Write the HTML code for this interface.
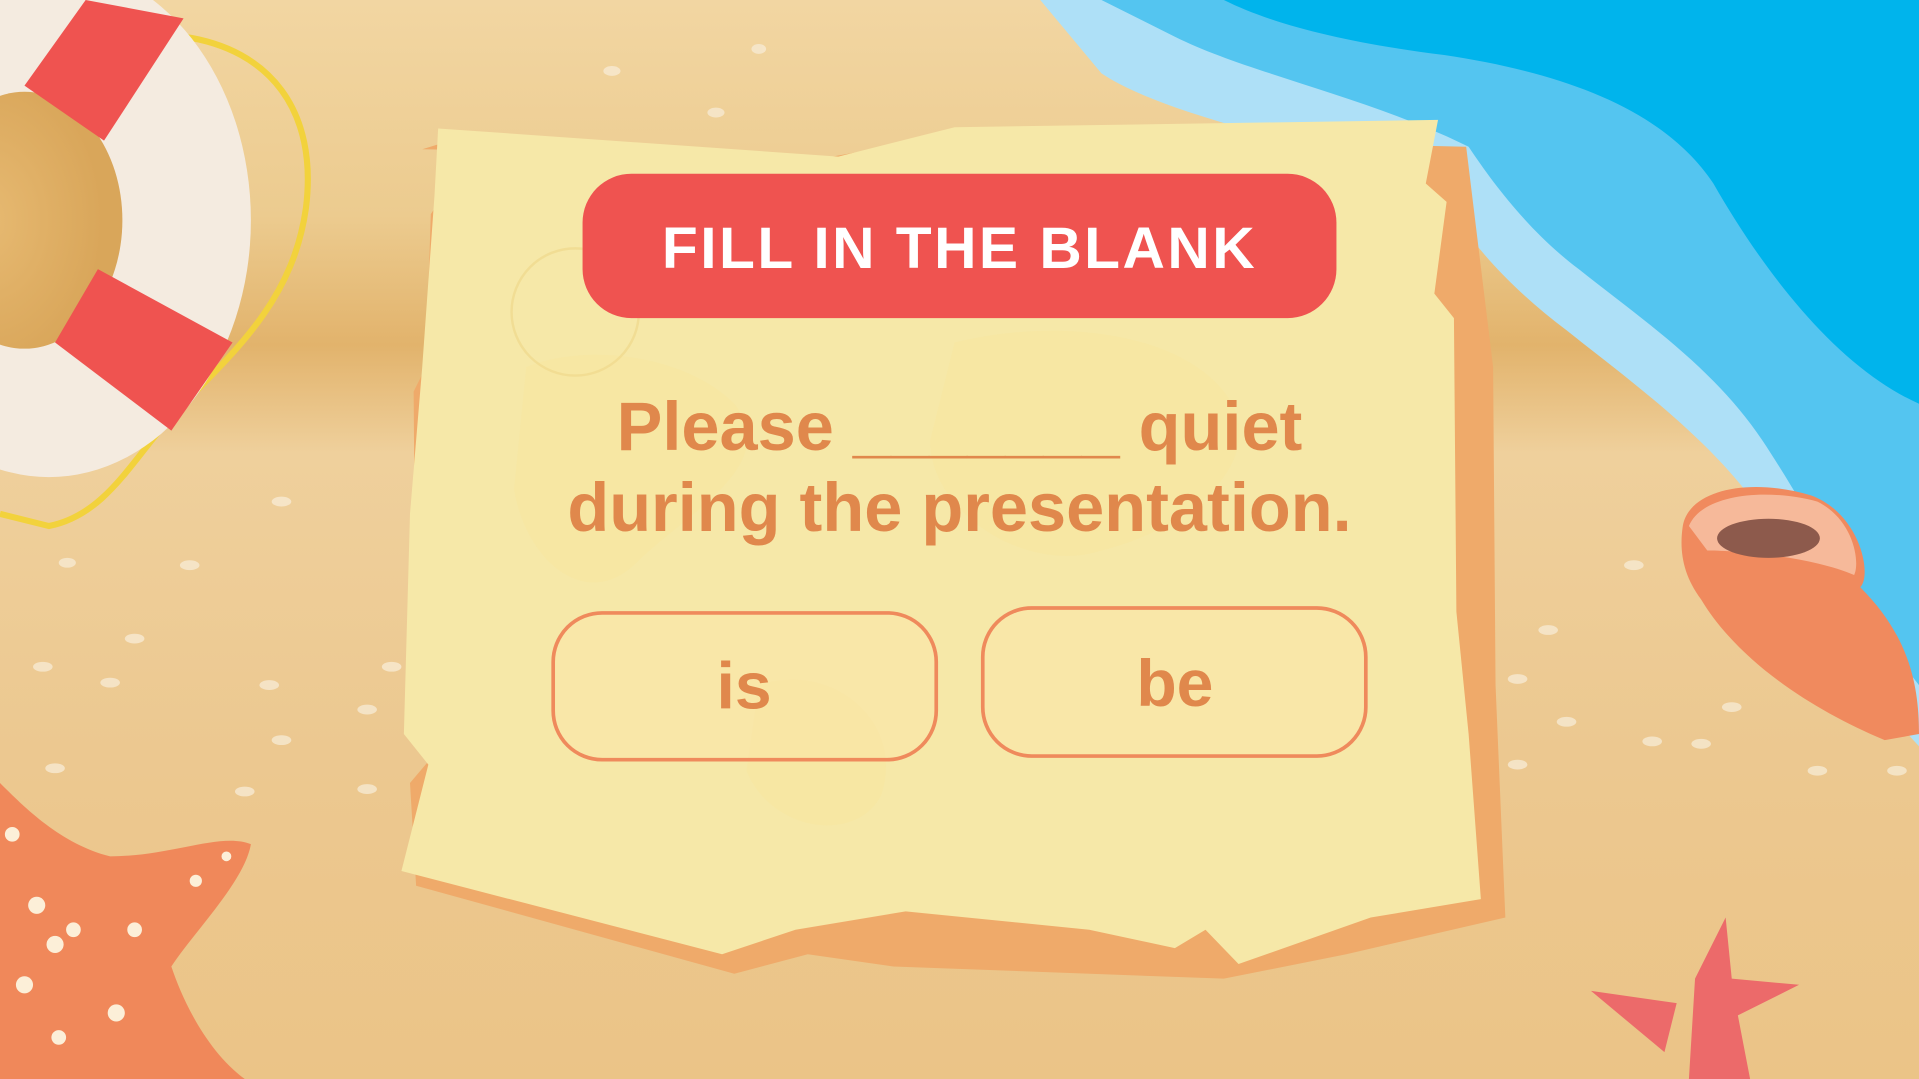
<!DOCTYPE html>
<html><head><meta charset="utf-8"><style>
html,body{margin:0;padding:0;width:1919px;height:1079px;overflow:hidden;background:#ecc98c}
svg{display:block}
</style></head><body>
<svg width="1919" height="1079" viewBox="0 0 1568 882" preserveAspectRatio="none" xmlns="http://www.w3.org/2000/svg">
<defs>
<linearGradient id="sand" x1="0" y1="0" x2="0" y2="1">
<stop offset="0" stop-color="#f2d6a2"/>
<stop offset="0.2" stop-color="#eccb8f"/>
<stop offset="0.32" stop-color="#e2b36c"/>
<stop offset="0.42" stop-color="#efd09c"/>
<stop offset="0.7" stop-color="#ecc890"/>
<stop offset="1" stop-color="#ebc487"/>
</linearGradient>
<radialGradient id="ring" cx="0.3" cy="0.5" r="0.6"><stop offset="0" stop-color="#e7ba72"/><stop offset="1" stop-color="#d9a65a"/></radialGradient>
</defs>
<rect width="1568" height="882" fill="url(#sand)"/>
<g fill="#f7ead2" opacity="0.8">
<ellipse cx="500" cy="58" rx="7" ry="4"/><ellipse cx="585" cy="92" rx="7" ry="4"/><ellipse cx="620" cy="40" rx="6" ry="4"/><ellipse cx="230" cy="410" rx="8" ry="4"/><ellipse cx="155" cy="462" rx="8" ry="4"/><ellipse cx="55" cy="460" rx="7" ry="4"/><ellipse cx="35" cy="545" rx="8" ry="4"/><ellipse cx="90" cy="558" rx="8" ry="4"/><ellipse cx="220" cy="560" rx="8" ry="4"/><ellipse cx="300" cy="580" rx="8" ry="4"/><ellipse cx="230" cy="605" rx="8" ry="4"/><ellipse cx="45" cy="628" rx="8" ry="4"/><ellipse cx="320" cy="545" rx="8" ry="4"/><ellipse cx="1265" cy="515" rx="8" ry="4"/><ellipse cx="1335" cy="462" rx="8" ry="4"/><ellipse cx="1280" cy="590" rx="8" ry="4"/><ellipse cx="1350" cy="606" rx="8" ry="4"/><ellipse cx="1390" cy="608" rx="8" ry="4"/><ellipse cx="1240" cy="555" rx="8" ry="4"/><ellipse cx="1485" cy="630" rx="8" ry="4"/><ellipse cx="1550" cy="630" rx="8" ry="4"/><ellipse cx="1415" cy="578" rx="8" ry="4"/><ellipse cx="1240" cy="625" rx="8" ry="4"/><ellipse cx="200" cy="647" rx="8" ry="4"/><ellipse cx="300" cy="645" rx="8" ry="4"/><ellipse cx="110" cy="522" rx="8" ry="4"/>
</g>
<!-- sea -->
<path d="M850 0 L1568 0 L1568 610 C1520 560 1480 480 1440 420 C1400 360 1330 310 1280 270 C1240 240 1200 200 1180 160 C1100 120 960 100 900 60 Z" fill="#aee0f7"/>
<path d="M900 0 L1568 0 L1568 560 C1520 500 1480 420 1440 360 C1400 300 1340 260 1290 220 C1250 190 1220 150 1200 120 C1120 80 1020 60 960 30 Z" fill="#54c5f0"/>
<path d="M1000 0 L1568 0 L1568 330 C1500 300 1440 220 1400 150 C1360 90 1280 60 1180 45 C1100 35 1040 20 1000 0 Z" fill="#00b4ec"/>
<!-- life ring -->
<path d="M150 30 C220 40 260 90 250 170 C240 240 200 280 150 330 C110 370 90 420 40 430 L0 420" fill="none" stroke="#f2d23c" stroke-width="5"/>
<ellipse cx="40" cy="180" rx="165" ry="210" fill="#f4ebe0"/>
<ellipse cx="20" cy="180" rx="80" ry="105" fill="url(#ring)"/>
<path d="M20 70 L70 0 L150 15 L85 115 Z" fill="#ef5350"/>
<path d="M80 220 L190 280 L140 352 L45 280 Z" fill="#ef5350"/>
<!-- starfish left -->
<path d="M0 640 C20 660 50 690 90 700 C140 700 180 680 205 690 C200 720 160 760 140 790 C150 820 170 860 200 882 L0 882 Z" fill="#f0885a"/>
<g fill="#fcefd8"><circle cx="10" cy="682" r="6"/><circle cx="30" cy="740" r="7"/><circle cx="45" cy="772" r="7"/><circle cx="20" cy="805" r="7"/><circle cx="95" cy="828" r="7"/><circle cx="60" cy="760" r="6"/><circle cx="160" cy="720" r="5"/><circle cx="48" cy="848" r="6"/><circle cx="110" cy="760" r="6"/><circle cx="185" cy="700" r="4"/></g>
<!-- starfish right -->
<path d="M1380 882 L1385 800 L1410 750 L1415 800 L1470 805 L1420 830 L1430 882 Z M1300 810 L1370 820 L1360 860 Z" fill="#ec6a6a"/>
<!-- shell -->
<path d="M1375 430 C1380 400 1430 390 1480 405 C1520 420 1530 470 1520 480 C1560 520 1568 560 1568 600 L1540 605 C1480 580 1420 540 1390 490 C1375 470 1372 450 1375 430 Z" fill="#f08a5e"/>
<path d="M1380 430 C1390 405 1440 398 1485 410 C1515 425 1520 460 1515 470 C1480 455 1420 450 1395 450 Z" fill="#f6b99a"/>
<ellipse cx="1445" cy="440" rx="42" ry="16" fill="#8d5a4c"/>
<!-- map -->
<path d="M345 122 L358 118 L362 160 L352 175 L348 300 L338 320 L340 610 L352 620 L335 640 L340 724 L600 796 L660 780 L730 790 L1000 800 L1100 780 L1230 750 L1222 560 L1220 300 L1198 120 L780 110 L680 128 Z" fill="#efaa6a"/>
<path d="M358 105 L685 128 L780 104 L1175 98 L1165 150 L1182 165 L1172 240 L1188 260 L1190 500 L1200 600 L1210 735 L1120 750 L1012 788 L985 760 L960 775 L890 760 L740 745 L650 760 L590 780 L328 712 L350 625 L330 600 L335 420 L345 300 L355 160 Z" fill="#f6e8a8"/>
<g fill="#f9e6a0" opacity="0.6"><path d="M430 300 C480 280 560 290 600 330 C640 380 560 420 520 460 C480 500 430 460 420 400 Z"/><path d="M780 280 C860 260 960 270 1000 320 C1040 370 980 430 900 450 C840 470 760 420 760 360 Z"/><path d="M620 560 C680 540 740 590 720 650 C700 690 630 680 610 630 Z"/></g>
<circle cx="470" cy="255" r="52" fill="none" stroke="#f0d98c" stroke-width="2" opacity="0.7"/>
<!-- title -->
<rect x="476" y="142" width="616" height="118" rx="40" fill="#ef5350"/>
<text x="784" y="219" text-anchor="middle" font-family="Liberation Sans, sans-serif" font-weight="700" font-size="48" fill="#ffffff" letter-spacing="2">FILL IN THE BLANK</text>
<!-- question -->
<g font-family="Liberation Sans, sans-serif" font-weight="700" font-size="56" fill="#e0884c" text-anchor="middle">
<text x="784" y="368">Please _______ quiet</text>
<text x="784" y="434">during the presentation.</text>
</g>
<!-- options -->
<rect x="452" y="501" width="313" height="120" rx="40" fill="#fbe6a8" fill-opacity="0.5" stroke="#ef8a5c" stroke-width="3"/>
<rect x="803" y="497" width="313" height="121" rx="40" fill="#fbe6a8" fill-opacity="0.5" stroke="#ef8a5c" stroke-width="3"/>
<g font-family="Liberation Sans, sans-serif" font-weight="700" font-size="54" fill="#e0884c" text-anchor="middle">
<text x="608" y="579">is</text>
<text x="960" y="577">be</text>
</g>
</svg>
</body></html>
